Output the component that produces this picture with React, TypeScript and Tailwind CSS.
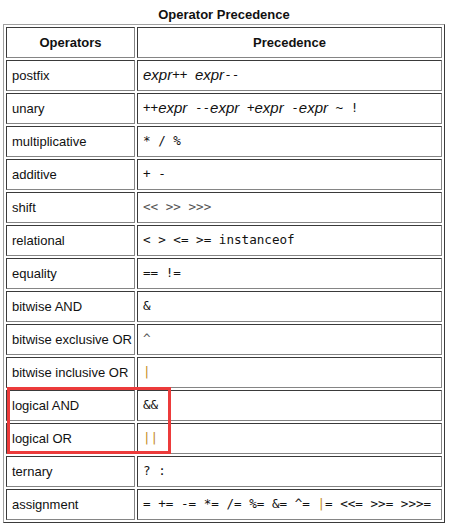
import React from "react";

const cell =
  "h-[31px] flex items-center px-[5px] border border-t-[#3a3a3a] border-l-[#3a3a3a] border-r-[#858585] border-b-[#858585] text-[13px] whitespace-nowrap";

function M({ children, className = "" }: { children: React.ReactNode; className?: string }) {
  return (
    <span className={"font-['DejaVu_Sans_Mono',monospace] text-[12.6px] whitespace-pre " + className}>
      {children}
    </span>
  );
}

function E() {
  return <span className="italic text-[15px] font-['Liberation_Sans',Arial,sans-serif]">expr</span>;
}

function P() {
  return <span className="text-[#c38a1c]">|</span>;
}

const rows: [string, React.ReactNode][] = [
  [
    "postfix",
    <>
      <E />
      <M>{"++ "}</M>
      <E />
      <M>--</M>
    </>,
  ],
  [
    "unary",
    <>
      <M>++</M>
      <E />
      <M>{" --"}</M>
      <E />
      <M>{" +"}</M>
      <E />
      <M>{" -"}</M>
      <E />
      <M>{" ~ !"}</M>
    </>,
  ],
  ["multiplicative", <M>{"* / %"}</M>],
  ["additive", <M>{"+ -"}</M>],
  ["shift", <M className="text-[#555]">{"<< >> >>>"}</M>],
  ["relational", <M>{"< > <= >= instanceof"}</M>],
  ["equality", <M>{"== !="}</M>],
  ["bitwise AND", <M>&amp;</M>],
  ["bitwise exclusive OR", <M className="text-[#555]">^</M>],
  [
    "bitwise inclusive OR",
    <M>
      <P />
    </M>,
  ],
  ["logical AND", <M>&amp;&amp;</M>],
  [
    "logical OR",
    <M>
      <P />
      <P />
    </M>,
  ],
  ["ternary", <M>{"? :"}</M>],
  [
    "assignment",
    <M>
      {"= += -= *= /= %= &= ^= "}
      <P />
      {"= <<= >>= >>>="}
    </M>,
  ],
];

export default function App() {
  return (
    <div className="relative w-[455px] h-[530px] bg-white text-[#111] font-['Liberation_Sans',Arial,sans-serif]">
      <div className="pl-[3px]">
        <div className="w-[442px] pt-[7px] pb-[2px] text-center font-bold text-[13px] leading-[15px]">
          Operator Precedence
        </div>
        <div className="w-[442px] grid grid-cols-[129px_305px] gap-[2px] p-[2px] border border-t-[#a0a0a0] border-l-[#a0a0a0] border-r-[#3a3a3a] border-b-[#3a3a3a]">
          <div className={cell + " justify-center font-bold"}>Operators</div>
          <div className={cell + " justify-center font-bold"}>Precedence</div>
          {rows.map(([label, prec]) => (
            <React.Fragment key={label}>
              <div className={cell}>{label}</div>
              <div className={cell}>{prec}</div>
            </React.Fragment>
          ))}
        </div>
      </div>
      <div className="absolute left-[7px] top-[387px] w-[164px] h-[67px] border-[3px] border-[#ec3b3b]" />
    </div>
  );
}
